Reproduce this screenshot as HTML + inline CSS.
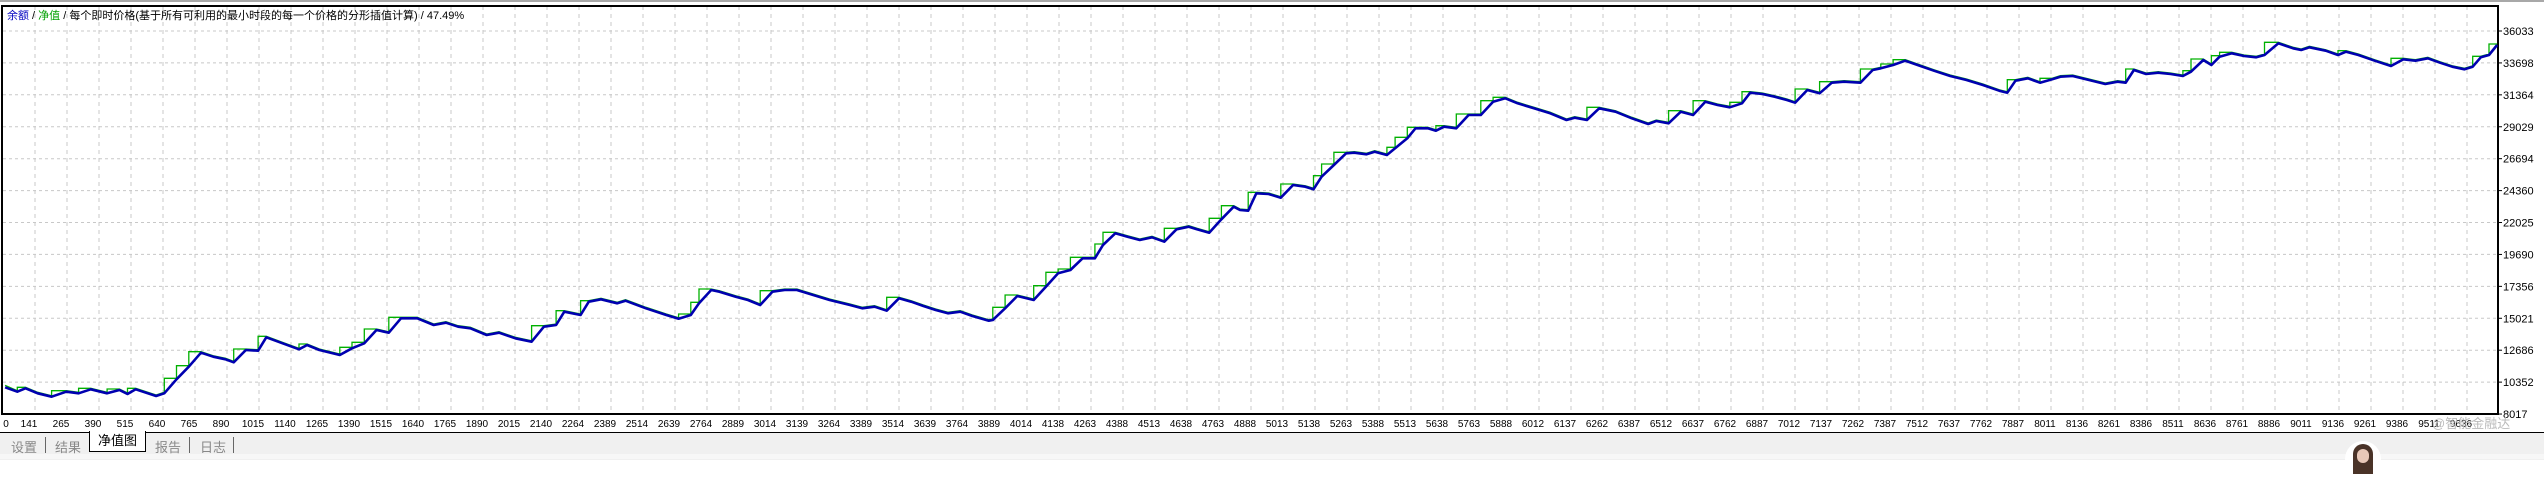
<!DOCTYPE html>
<html><head><meta charset="utf-8">
<style>
html,body{margin:0;padding:0;background:#fff;width:2544px;height:459px;overflow:hidden;font-family:"Liberation Sans","Noto Sans CJK SC",sans-serif}
#topline{position:absolute;left:0;top:0;width:2544px;height:2px;background:#a8a8a8}
#bar{position:absolute;left:0;top:432px;width:2544px;height:27px;background:#f0f0f0;border-top:1px solid #000}
#bar2{position:absolute;left:0;top:454px;width:2544px;height:5px;background:#f7f7f7}
.tab{position:absolute;top:437px;font-size:13px;color:#888;font-family:"Liberation Sans","Noto Sans CJK SC",sans-serif}
.sep{position:absolute;top:437px;width:1px;height:16px;background:#666}
#act{position:absolute;left:89px;top:431px;width:55px;height:20px;background:#fff;border:1px solid #000;border-top:none;font-size:13px;color:#000;text-align:center;line-height:20px}
</style></head><body>
<div id="topline"></div>
<svg id="s" width="2544" height="459" style="position:absolute;left:0;top:0" xmlns="http://www.w3.org/2000/svg"></svg>
<div id="bar"></div><div id="bar2"></div>
<div class="tab" style="left:11px">设置</div><div class="sep" style="left:45px"></div>
<div class="tab" style="left:55px">结果</div>
<div id="act">净值图</div>
<div class="tab" style="left:155px">报告</div><div class="sep" style="left:189px"></div>
<div class="tab" style="left:200px">日志</div><div class="sep" style="left:233px"></div>
<div style="position:absolute;left:2345px;top:441px;width:36px;height:36px;border-radius:50%;background:#fff;overflow:hidden"><div style="position:absolute;left:8px;top:3px;width:20px;height:30px;border-radius:10px 10px 0 0;background:#4a3328"></div><div style="position:absolute;left:12px;top:8px;width:12px;height:14px;border-radius:6px;background:#e8c8b8"></div></div>
<script>
var s=document.getElementById('s'),h='';
var L=3,R=2498,T=6,B=414;
for(var k=0;k<13;k++){var y=31+k*31.92;h+='<line x1="'+L+'" x2="'+R+'" y1="'+y.toFixed(1)+'" y2="'+y.toFixed(1)+'" stroke="#c8c8c8" stroke-dasharray="3,3"/>';}
for(var i=1;i<78;i++){var x=3+i*32;h+='<line x1="'+x+'" x2="'+x+'" y1="'+T+'" y2="'+B+'" stroke="#c8c8c8" stroke-dasharray="4,4"/>';}
h+='<rect x="'+(L-1)+'" y="'+T+'" width="'+(R-L+1)+'" height="'+(B-T)+'" fill="none" stroke="#000" stroke-width="2"/>';
var yl=[36033,33698,31364,29029,26694,24360,22025,19690,17356,15021,12686,10352,8017];
for(var k=0;k<13;k++){var y=31+k*31.92;h+='<line x1="'+R+'" x2="'+(R+4)+'" y1="'+y+'" y2="'+y+'" stroke="#000"/><text x="'+(R+5)+'" y="'+(y+4)+'" font-size="11" fill="#000">'+yl[k]+'</text>';}
var xl="0 141 265 390 515 640 765 890 1015 1140 1265 1390 1515 1640 1765 1890 2015 2140 2264 2389 2514 2639 2764 2889 3014 3139 3264 3389 3514 3639 3764 3889 4014 4138 4263 4388 4513 4638 4763 4888 5013 5138 5263 5388 5513 5638 5763 5888 6012 6137 6262 6387 6512 6637 6762 6887 7012 7137 7262 7387 7512 7637 7762 7887 8011 8136 8261 8386 8511 8636 8761 8886 9011 9136 9261 9386 9511 9636".split(' ');
for(var i=0;i<xl.length;i++){var cx=i==0?6:32*i-3;h+='<text x="'+cx+'" y="427" font-size="10" text-anchor="middle" fill="#000">'+xl[i]+'</text>';}
h+='<text x="7" y="19" font-size="11"><tspan fill="#0000c0">余额</tspan><tspan fill="#000"> / </tspan><tspan fill="#00a000">净值</tspan><tspan fill="#000"> / 每个即时价格(基于所有可利用的最小时段的每一个价格的分形插值计算) / 47.49%</tspan></text>';
var a=[5,622,20,635,30,625,45,640,62,650,80,635,95,640,110,628,130,640,145,630,155,642,165,628,190,648,200,640,215,598,230,560,245,518,260,530,275,538,285,547,300,510,315,512,325,472,345,490,365,508,375,495,390,510,415,525,430,505,445,490,460,450,475,458,490,415,510,415,530,435,545,428,560,440,575,445,595,465,610,458,630,475,650,485,665,440,680,435,690,395,710,405,720,365,735,358,755,370,765,362,790,385,815,405,830,416,845,405,855,370,870,330,880,335,900,350,915,360,930,375,945,335,960,330,975,330,995,345,1015,360,1040,375,1055,385,1070,380,1085,392,1100,355,1115,365,1130,378,1145,390,1160,400,1175,395,1190,408,1210,422,1215,420,1230,385,1245,348,1265,360,1280,320,1295,280,1310,270,1325,235,1340,235,1350,195,1365,160,1380,170,1395,180,1410,172,1425,185,1440,148,1455,140,1465,148,1480,158,1495,118,1510,80];
var b=[0,570,10,572,20,520,35,522,50,533,65,495,80,500,90,508,100,470,115,435,130,400,140,398,155,403,165,395,180,405,190,385,205,355,215,325,230,325,240,332,250,320,265,325,280,285,295,285,310,245,325,235,340,250,360,265,380,280,400,300,410,293,425,300,440,265,460,275,480,295,500,312,510,303,525,310,540,275,555,285,570,245,585,255,600,262,615,250,625,218,640,222,655,230,670,240,680,248,695,210,710,220,725,188,740,185,760,188,775,150,785,145,800,135,815,122,830,135,850,152,870,168,890,180,910,195,930,212,940,218,950,182,965,175,980,188,995,178,1005,170,1020,168,1040,180,1060,192,1075,185,1085,188,1095,150,1110,162,1125,158,1140,162,1155,168,1165,155,1180,120,1190,135,1200,110,1215,100,1230,108,1245,112,1255,105,1272,70,1290,85,1300,90,1310,82,1330,92,1345,105,1355,95,1370,105,1390,122,1410,138,1425,118,1440,122,1455,115,1470,128,1485,140,1500,148,1510,140,1520,112,1530,105,1540,75];
var p=[];
for(var i=0;i<a.length;i+=2){var x=a[i]/1.225;if(x<1238)p.push([x+1,180+a[i+1]/3]);}
for(var i=0;i<b.length;i+=2){p.push([1240+b[i]/1.225,20+b[i+1]/3]);}
var g='M'+p[0][0].toFixed(1)+' '+(p[0][1]-2).toFixed(1),d='M'+p[0][0].toFixed(1)+' '+p[0][1].toFixed(1);
for(var i=1;i<p.length;i++){d+=' L'+p[i][0].toFixed(1)+' '+p[i][1].toFixed(1);
 var ny=p[i][1];
 if(ny<p[i-1][1]-3){g+=' V'+(ny-1).toFixed(1)+' H'+p[i][0].toFixed(1);}else{g+=' L'+p[i][0].toFixed(1)+' '+(ny-1).toFixed(1);}}
h+='<path d="'+g+'" fill="none" stroke="#00b000" stroke-width="1.3"/>';
h+='<path d="'+d+'" fill="none" stroke="#0000b0" stroke-width="2.6" stroke-linejoin="round"/>';
h+='<text x="2432" y="428" font-size="13" fill="#bbb">@智能金融达</text>';
s.innerHTML=h;
</script>
</body></html>
